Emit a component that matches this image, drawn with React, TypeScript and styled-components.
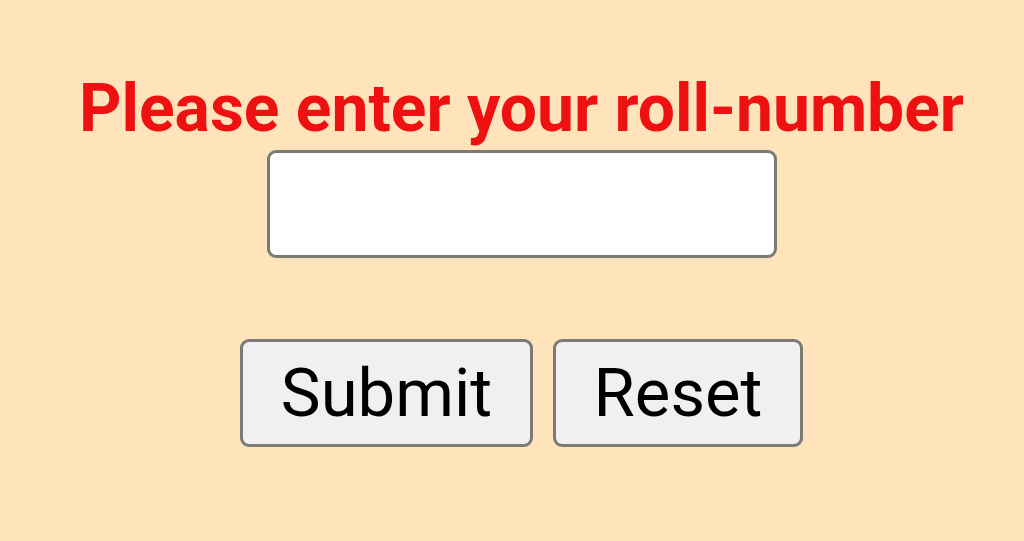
import React from "react";
import styled, { createGlobalStyle } from "styled-components";

const Global = createGlobalStyle`
  html, body { margin: 0; padding: 0; }
  body { background: #ffe4bb; font-family: Roboto, "Liberation Sans", sans-serif; }
`;

const Page = styled.div`
  width: 1024px;
  height: 541px;
  display: flex;
  flex-direction: column;
  align-items: center;
  box-sizing: border-box;
  padding-top: 69px;
  padding-left: 19px;
`;

const Heading = styled.h1`
  margin: 0;
  color: #ee1111;
  font-family: Roboto, "Liberation Sans", sans-serif;
  font-weight: 700;
  font-size: 66px;
  line-height: 80px;
  white-space: nowrap;
`;

const Field = styled.input`
  box-sizing: border-box;
  width: 510px;
  height: 108px;
  margin-top: 1px;
  background: #ffffff;
  border: 3px solid #7b7a74;
  border-radius: 9px;
  outline: none;
`;

const Actions = styled.div`
  display: flex;
  gap: 20px;
  margin-top: 81px;
`;

const Button = styled.button<{ $w: number }>`
  box-sizing: border-box;
  width: ${(p) => p.$w}px;
  height: 108px;
  background: #f0f0f0;
  border: 3px solid #7b7a74;
  border-radius: 9px;
  color: #000;
  font-family: Roboto, "Liberation Sans", sans-serif;
  font-size: 67px;
  font-weight: 400;
  padding: 0;
`;

export default function App() {
  return (
    <>
      <Global />
      <Page>
        <Heading>Please enter your roll-number</Heading>
        <Field type="text" />
        <Actions>
          <Button $w={293}>Submit</Button>
          <Button $w={250}>Reset</Button>
        </Actions>
      </Page>
    </>
  );
}
